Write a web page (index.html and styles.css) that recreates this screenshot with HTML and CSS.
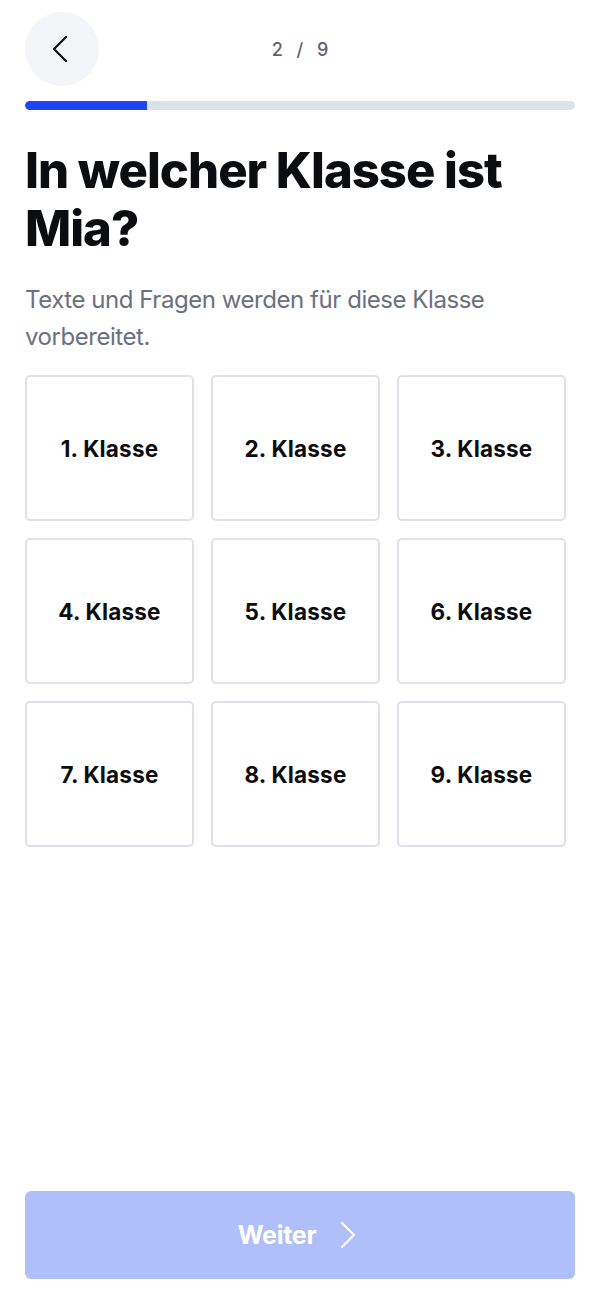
FILE: index.html
```html
<!DOCTYPE html>
<html lang="de">
<head>
<meta charset="utf-8">
<title>Klasse wählen</title>
<link rel="stylesheet" href="styles.css">
</head>
<body>
<div class="page">
  <header class="top">
    <button class="back" aria-label="Zurück">
      <svg width="16" height="26" viewBox="0 0 16 26"><path d="M14 1 L2 13 L14 25" fill="none" stroke="#111" stroke-width="2.2" stroke-linecap="round" stroke-linejoin="round"/></svg>
    </button>
    <div class="step">2 / 9</div>
    <div class="spacer"></div>
  </header>
  <div class="track"><div class="fill" style="width:22.2%"></div></div>
  <h1 class="title">In welcher Klasse ist Mia?</h1>
  <p class="sub">Texte und Fragen werden für diese Klasse vorbereitet.</p>
  <div class="grid">
    <button class="card">1. Klasse</button>
    <button class="card">2. Klasse</button>
    <button class="card">3. Klasse</button>
    <button class="card">4. Klasse</button>
    <button class="card">5. Klasse</button>
    <button class="card">6. Klasse</button>
    <button class="card">7. Klasse</button>
    <button class="card">8. Klasse</button>
    <button class="card">9. Klasse</button>
  </div>
  <div class="grow"></div>
  <button class="next">
    <span>Weiter</span>
    <svg width="16" height="28" viewBox="0 0 16 28"><path d="M2 2 L14 14 L2 26" fill="none" stroke="#fff" stroke-width="2.2" stroke-linecap="round" stroke-linejoin="round"/></svg>
  </button>
</div>
</body>
</html>
```
FILE: styles.css
```css
* { box-sizing: border-box; }
html, body { margin: 0; padding: 0; background: #fff; }
body { font-family: Inter, "Liberation Sans", sans-serif; color: #0c0d10; }
.page {
  min-height: 1298px;
  padding: 12px 25px 19px;
  display: flex;
  flex-direction: column;
}
.top {
  display: flex;
  align-items: center;
  height: 74px;
}
.back {
  width: 74px;
  height: 74px;
  border-radius: 50%;
  border: none;
  background: #f3f5f8;
  display: flex;
  align-items: center;
  justify-content: center;
  padding: 0 4px 0 0;
  flex: none;
}
.step {
  flex: 1;
  text-align: center;
  font-size: 18px;
  font-weight: 500;
  color: #5f6370;
  word-spacing: 9px;
  padding-right: 0;
}
.spacer { width: 74px; flex: none; }
.track {
  margin-top: 15px;
  height: 9px;
  border-radius: 5px;
  background: #dde1e9;
  overflow: hidden;
}
.fill { height: 100%; background: #1f45f5; border-radius: 5px 0 0 5px; }
.title {
  margin: 32px 0 0;
  font-size: 49px;
  line-height: 58px;
  font-weight: 800;
  letter-spacing: -1px;
  max-width: 520px;
}
.sub {
  margin: 23px 0 0;
  font-size: 24px;
  line-height: 37px;
  color: #6b7080;
  letter-spacing: -0.45px;
}
.grid {
  margin-top: 20px;
  width: 541px;
  display: grid;
  grid-template-columns: repeat(3, 1fr);
  gap: 17px;
}
.card {
  height: 146px;
  border: 2px solid #dfe1ea;
  border-radius: 5px;
  background: #fff;
  font-family: Inter, "Liberation Sans", sans-serif;
  font-size: 22.5px;
  font-weight: 700;
  color: #0c0d10;
  letter-spacing: 0.2px;
}
.grow { flex: 1; }
.next {
  height: 88px;
  border: none;
  border-radius: 6px;
  background: #afbff9;
  color: #fff;
  display: flex;
  align-items: center;
  justify-content: center;
  gap: 24px;
  font-family: Inter, "Liberation Sans", sans-serif;
  font-size: 25px;
  font-weight: 700;
  letter-spacing: -0.3px;
  padding-left: 0;
}
```
